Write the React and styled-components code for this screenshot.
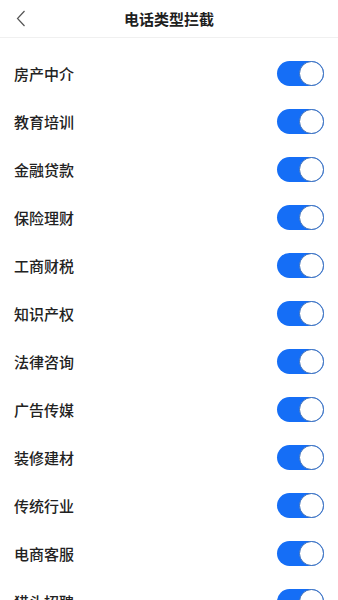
import React, { useState } from 'react'
import styled, { createGlobalStyle } from 'styled-components'

const GlobalStyle = createGlobalStyle`
  html, body {
    margin: 0;
    padding: 0;
    background: #ffffff;
    font-family: "Noto Sans CJK SC", "Noto Sans", sans-serif;
  }
`

const Page = styled.div`
  width: 338px;
  height: 600px;
  overflow: hidden;
  background: #ffffff;
`

const Header = styled.div`
  height: 37px;
  display: flex;
  align-items: center;
  justify-content: center;
  position: relative;
  border-bottom: 1px solid #f0f0f0;
`

const Back = styled.button`
  position: absolute;
  left: 12px;
  top: 8px;
  width: 18px;
  height: 20px;
  padding: 0;
  border: none;
  background: transparent;
  display: flex;
  align-items: center;
  justify-content: center;
`

const Title = styled.h1`
  margin: 0;
  font-size: 15px;
  font-weight: 700;
  color: #1f1f1f;
  line-height: 1;
`

const List = styled.div`
  display: flex;
  flex-direction: column;
  padding-top: 11px;
`

const Row = styled.div`
  height: 48px;
  display: flex;
  align-items: center;
  justify-content: space-between;
  padding: 0 14px 0 14px;
`

const Label = styled.span`
  font-size: 15px;
  font-weight: 500;
  color: #222222;
`

const Switch = styled.button`
  width: 47px;
  height: 25px;
  border-radius: 13px;
  border: none;
  padding: 0;
  position: relative;
  background: ${p => (p.$on ? '#156ef6' : '#e5e5e5')};
  cursor: pointer;
`

const Knob = styled.span`
  position: absolute;
  top: 0;
  left: ${p => (p.$on ? '22px' : '0')};
  width: 25px;
  height: 25px;
  box-sizing: border-box;
  border-radius: 50%;
  background: #ffffff;
  border: 1px solid #3d6fb8;
`

const items = [
  '房产中介',
  '教育培训',
  '金融贷款',
  '保险理财',
  '工商财税',
  '知识产权',
  '法律咨询',
  '广告传媒',
  '装修建材',
  '传统行业',
  '电商客服',
  '猎头招聘',
]

export default function App() {
  const [state, setState] = useState(items.map(() => true))

  const toggle = i => {
    setState(s => s.map((v, j) => (j === i ? !v : v)))
  }

  return (
    <>
      <GlobalStyle />
      <Page>
        <Header>
          <Back aria-label="返回">
            <svg width="10" height="17" viewBox="0 0 10 17">
              <path d="M8.5 1 L1.5 8.5 L8.5 16" fill="none" stroke="#555" strokeWidth="1.2" />
            </svg>
          </Back>
          <Title>电话类型拦截</Title>
        </Header>
        <List>
          {items.map((name, i) => (
            <Row key={name}>
              <Label>{name}</Label>
              <Switch $on={state[i]} onClick={() => toggle(i)}>
                <Knob $on={state[i]} />
              </Switch>
            </Row>
          ))}
        </List>
      </Page>
    </>
  )
}
